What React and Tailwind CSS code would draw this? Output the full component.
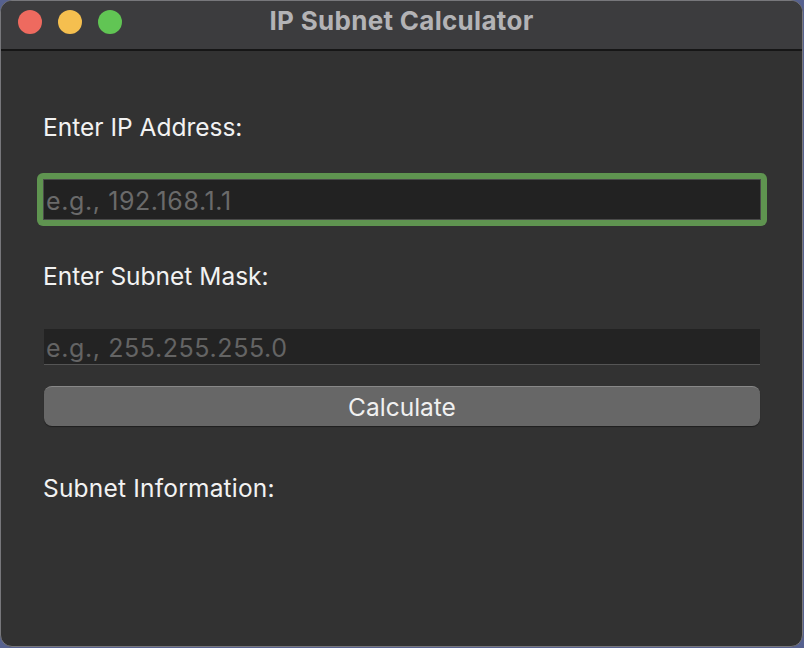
export default function App() {
  return (
    <div className="w-[804px] h-[648px] bg-[#56618f] overflow-hidden" style={{ fontFamily: 'Inter, "Liberation Sans", sans-serif' }}>
      <div className="w-[803px] h-[647px] rounded-[12px] border border-[#77777b] overflow-hidden flex flex-col bg-[#323232]">
        <div className="relative h-[50px] shrink-0 bg-[#3c3c3e] border-b-2 border-[#161616] flex items-center justify-center">
          <div className="absolute left-[17px] top-[9px] flex gap-[16px]">
            <div className="w-[24px] h-[24px] rounded-full bg-[#ee6a5f]" />
            <div className="w-[24px] h-[24px] rounded-full bg-[#f5bf4f]" />
            <div className="w-[24px] h-[24px] rounded-full bg-[#61c554]" />
          </div>
          <div className="text-[26px] leading-[30px] font-bold text-[#b3b3b6] pb-[8px] tracking-[0.3px]">IP Subnet Calculator</div>
        </div>
        <div className="flex flex-col pl-[43px] pr-[42px] pt-[62px]">
          <div className="text-[24.5px] leading-[28px] text-[#f2f2f2] -ml-[1px]">Enter IP Address:</div>
          <div className="mt-[32px] -ml-[7px] -mr-[7px] rounded-[6px] bg-[#5f9450] p-[6px]">
            <div className="h-[41px] border border-[#4a4a4a] bg-[#222222] flex items-center">
              <input
                className="w-full h-full bg-transparent outline-none pl-[2px] pt-[2px] text-[25px] tracking-[0.6px] text-[#e0e0e0] placeholder:text-[#6a6a6a]"
                placeholder="e.g., 192.168.1.1"
              />
            </div>
          </div>
          <div className="mt-[36px] text-[24.5px] leading-[28px] text-[#f2f2f2] -ml-[1px]">Enter Subnet Mask:</div>
          <div className="mt-[39px] h-[36px] bg-[#232323] border-b border-[#555555] flex items-center">
            <input
              className="w-full h-full bg-transparent outline-none pl-[2px] pt-[2px] text-[25px] tracking-[0.6px] text-[#e0e0e0] placeholder:text-[#646464]"
              placeholder="e.g., 255.255.255.0"
            />
          </div>
          <button className="mt-[21px] h-[40px] rounded-[8px] bg-[#676767] border-t border-[#888888] text-[24.5px] leading-[28px] text-[#f0f0f0] flex items-center justify-center shadow-[0_1px_1px_rgba(0,0,0,0.4)]">
            Calculate
          </button>
          <div className="mt-[48px] text-[24.5px] leading-[28px] tracking-[0.2px] text-[#f2f2f2] -ml-[1px]">Subnet Information:</div>
        </div>
      </div>
    </div>
  );
}
